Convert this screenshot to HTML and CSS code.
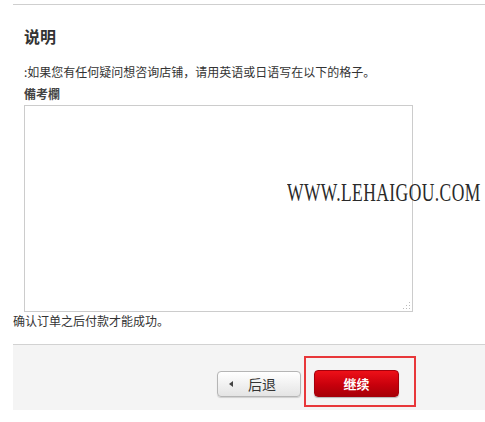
FILE: index.html
```html
<!DOCTYPE html>
<html lang="zh-CN">
<head>
<meta charset="utf-8">
<link rel="stylesheet" href="styles.css">
</head>
<body>
<div class="page">
  <div class="section">
    <h2 class="title">说明</h2>
    <p class="hint">:如果您有任何疑问想咨询店铺，请用英语或日语写在以下的格子。</p>
    <label class="label" for="memo">備考欄</label>
    <textarea id="memo" class="memo"></textarea>
  </div>
  <p class="confirm">确认订单之后付款才能成功。</p>
  <div class="footer">
    <button class="btn-back" type="button"><span class="tri"></span>后退</button>
    <span class="highlight"><button class="btn-next" type="button">继续</button></span>
  </div>
  <div class="watermark"><span>WWW.LEHAIGOU.COM</span></div>
</div>
</body>
</html>
```
FILE: styles.css
```css
html, body {
  margin: 0;
  padding: 0;
  background: #fff;
}
body {
  font-family: "Noto Sans CJK SC", "Noto Sans", sans-serif;
  color: #333;
  font-size: 12px;
}
.page {
  position: relative;
  width: 485px;
  height: 422px;
  overflow: hidden;
}
.section {
  margin: 4px 0 0 13px;
  border-top: 1px solid #cfcfcf;
  padding: 0 0 0 11px;
}
.title {
  margin: 21px 0 0 0;
  font-size: 16px;
  line-height: 20px;
  font-weight: bold;
  color: #333;
}
.hint {
  margin: 18px 0 0 0;
  font-size: 12px;
  line-height: 16px;
  color: #333;
}
.label {
  display: block;
  margin-top: 6px;
  font-size: 12px;
  line-height: 16px;
  font-weight: bold;
  color: #444;
}
.memo {
  display: block;
  box-sizing: border-box;
  width: 389px;
  height: 207px;
  margin: 3px 0 0 0;
  border: 1px solid #cccccc;
  background-color: #fff;
  background-image: url("data:image/svg+xml,%3Csvg xmlns='http://www.w3.org/2000/svg' width='8' height='8'%3E%3Cg fill='%23bbb'%3E%3Crect x='6' y='0' width='1' height='1'/%3E%3Crect x='6' y='3' width='1' height='1'/%3E%3Crect x='3' y='3' width='1' height='1'/%3E%3Crect x='6' y='6' width='1' height='1'/%3E%3Crect x='3' y='6' width='1' height='1'/%3E%3Crect x='0' y='6' width='1' height='1'/%3E%3C/g%3E%3C/svg%3E");
  background-repeat: no-repeat;
  background-position: right 1px bottom 1px;
  padding: 2px;
  resize: none;
  outline: none;
}
.confirm {
  margin: 1px 0 0 13px;
  font-size: 12px;
  line-height: 16px;
  color: #333;
}
.footer {
  margin: 15px 0 0 13px;
  height: 65px;
  border-top: 1px solid #d2d2d2;
  background: #f4f4f4;
  box-sizing: content-box;
  display: flex;
  align-items: flex-start;
  padding-left: 204px;
}
.btn-back {
  margin-top: 26px;
  width: 84px;
  height: 26px;
  box-sizing: border-box;
  border: 1px solid #b5b5b5;
  border-radius: 4px;
  background: linear-gradient(#ffffff, #e4e4e4);
  box-shadow: 0 1px 1px rgba(0,0,0,0.15);
  font-family: "Noto Sans CJK SC", sans-serif;
  font-size: 14px;
  line-height: 24px;
  color: #333;
  padding: 0 0 0 11px;
  display: flex;
  align-items: center;
  cursor: pointer;
}
.tri {
  width: 0;
  height: 0;
  border-top: 3px solid transparent;
  border-bottom: 3px solid transparent;
  border-right: 4px solid #444;
  margin-right: 15px;
}
.highlight {
  margin: 11px 0 0 3px;
  border: 2px solid #e8373a;
  padding: 12px 15px 8px 8px;
  display: flex;
}
.btn-next {
  width: 85px;
  height: 27px;
  box-sizing: border-box;
  border: 1px solid #a5000c;
  border-radius: 4px;
  background: linear-gradient(#ee1018, #c8000c 55%, #a80008);
  box-shadow: 0 1px 1px rgba(0,0,0,0.25);
  font-family: "Noto Sans CJK SC", sans-serif;
  font-size: 13px;
  font-weight: bold;
  color: #fff;
  line-height: 25px;
  padding: 0;
  cursor: pointer;
}
.watermark {
  position: absolute;
  left: 287px;
  top: 178px;
  font-family: "Liberation Serif", serif;
  font-size: 25px;
  line-height: 30px;
  letter-spacing: 0.6px;
  color: #2a2a2a;
  white-space: nowrap;
}
.watermark span {
  display: inline-block;
  transform: scaleX(0.7);
  transform-origin: left center;
}
```
